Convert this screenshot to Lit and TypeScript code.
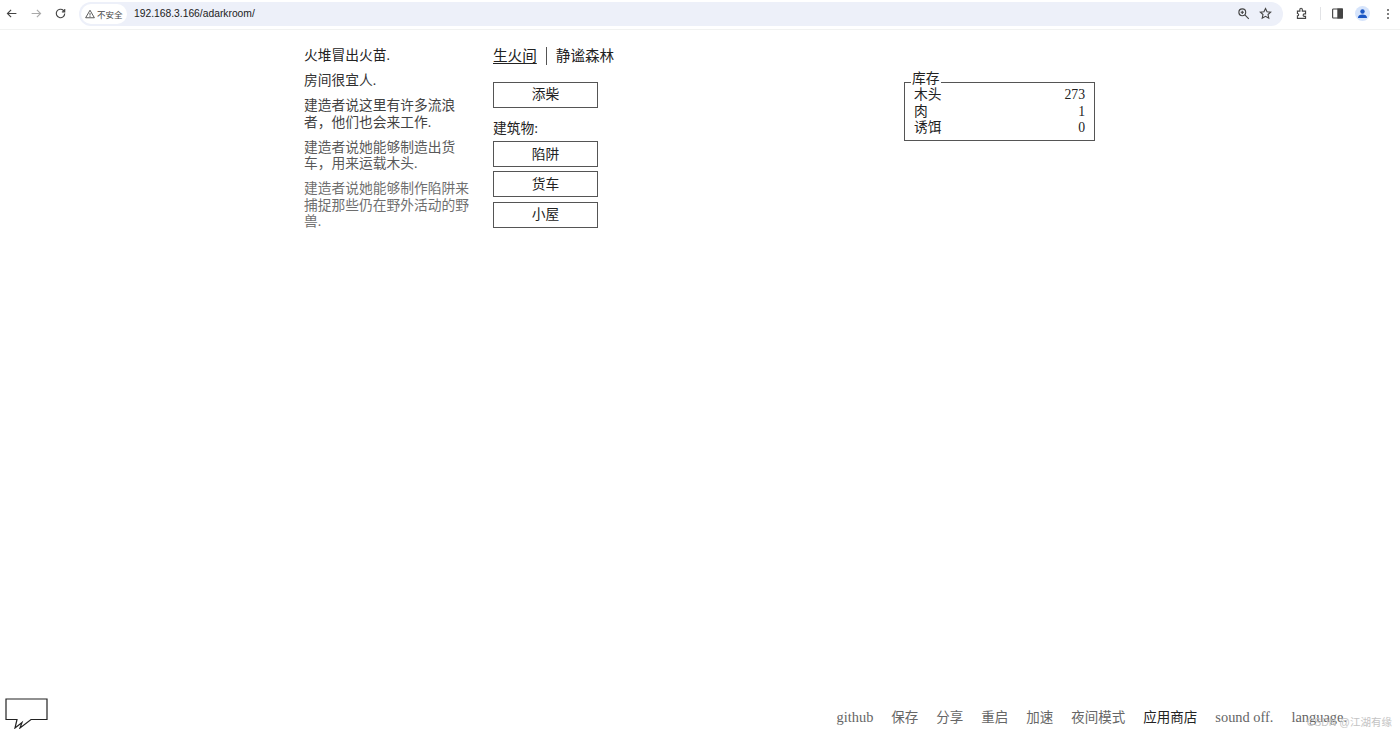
import { LitElement, html, css, svg } from "lit";
import { customElement } from "lit/decorators.js";

const messages: [string, number][] = [
  ["火堆冒出火苗.", 1],
  ["房间很宜人.", 0.92],
  ["建造者说这里有许多流浪者，他们也会来工作.", 0.85],
  ["建造者说她能够制造出货车，用来运载木头.", 0.75],
  ["建造者说她能够制作陷阱来捕捉那些仍在野外活动的野兽.", 0.65],
];
const builds = ["陷阱", "货车", "小屋"];
const stores = [["木头", "273"], ["肉", "1"], ["诱饵", "0"]];
const footer: [string, string][] = [
  ["github", "dim latin"], ["保存", "dim"], ["分享", "dim"], ["重启", "dim"], ["加速", "dim"],
  ["夜间模式", "dim"], ["应用商店", "strong"], ["sound off.", "dim latin"], ["language.", "dim latin"],
];

const icon = (body: unknown, cls = "ico", box = "0 0 16 16") =>
  html`<svg class=${cls} viewBox=${box} fill="none" stroke="currentColor" stroke-width="1.4">${body}</svg>`;

@customElement("app-root")
export class AppRoot extends LitElement {
  static styles = css`
    :host {
      display: flex;
      flex-direction: column;
      height: 732px;
      overflow: hidden;
      background: #fff;
      color: #222;
      position: relative;
      font: 13.75px/16.6px "Liberation Serif", "Noto Sans CJK SC", serif;
    }
    .chrome {
      flex: none;
      height: 30px;
      box-sizing: border-box;
      border-bottom: 1px solid #f1f2f1;
      display: flex;
      align-items: center;
      padding: 0 0 2px 5px;
      color: #444;
    }
    .ico { width: 13px; height: 13px; flex: none; }
    .nav { display: flex; gap: 11.5px; width: 74px; flex: none; }
    .nav .off { color: #aaa; }
    .url {
      width: 1204px;
      height: 24px;
      flex: none;
      background: #edf0f9;
      border-radius: 12px;
      display: flex;
      align-items: center;
      box-sizing: border-box;
      padding: 0 10px 0 2px;
      font: 10.3px "Liberation Sans", "Noto Sans CJK SC", sans-serif;
      color: #222;
    }
    .chip {
      display: flex;
      align-items: center;
      gap: 2px;
      height: 20px;
      width: 46px;
      box-sizing: border-box;
      padding-left: 4px;
      background: #fff;
      border-radius: 10px;
      font-size: 8.5px;
      color: #444;
      margin-right: 7px;
    }
    .chip .ico { width: 10px; height: 10px; }
    .addr { flex: 1; }
    .urlicons { display: flex; gap: 9px; color: #444; padding-right: 1px; }
    .tools {
      display: flex;
      align-items: center;
      color: #444;
      margin-left: 12px;
    }
    .sep { width: 1px; height: 13px; background: #e2e3e6; margin: 0 10.5px 0 11.5px; }
    .avatar {
      width: 15px; height: 15px; border-radius: 50%; background: #d6e4fb;
      margin-left: 11px; color: #1a56c4; display: flex; align-items: center; justify-content: center;
    }
    .avatar svg { width: 11px; height: 11px; }
    .dots { display: flex; flex-direction: column; gap: 2px; margin-left: 16.5px; }
    .dots i { width: 2px; height: 2px; background: #555; border-radius: 50%; display: block; }

    .stage {
      flex: 1;
      display: flex;
      align-items: flex-start;
      padding: 18px 0 0 304px;
    }
    .notes { width: 165px; flex: none; margin-right: 24px; }
    .notes p { margin: 0 0 8.4px; }
    .room { width: 411px; flex: none; }
    .tabs {
      display: flex;
      align-items: center;
      height: 18px;
      font-size: 14.6px;
      margin-top: -1px;
    }
    .tab { padding-right: 9px; line-height: 18px; color: #222; }
    .tab.on { text-decoration: underline; text-underline-offset: 2px; }
    .tab + .tab { border-left: 1px solid #555; padding-left: 9px; }
    button {
      display: block;
      box-sizing: border-box;
      width: 105px;
      height: 26px;
      background: #fff;
      border: 1px solid #555;
      font: inherit;
      color: #222;
      padding: 0;
    }
    .list button { padding-top: 2px; }
    .light { margin-top: 17px; }
    .label { margin: 13px 0 4px; height: 16px; line-height: 16px; }
    .list { display: flex; flex-direction: column; gap: 4.4px; }
    .stores {
      width: 191px;
      box-sizing: border-box;
      margin-top: 34px;
      border: 1px solid #555;
      padding: 4px 9px 3px 9px;
      position: relative;
      flex: none;
    }
    .legend {
      position: absolute;
      top: -13px;
      left: 6px;
      padding: 0 1px;
      background: #fff;
      line-height: 18px;
      height: 13px;
      color: #222;
    }
    .row { display: flex; justify-content: space-between; height: 16.5px; color: #222; }

    .foot {
      flex: none;
      height: 36px;
      display: flex;
      align-items: flex-start;
      padding-left: 5px;
      position: relative;
    }
    .bubble { width: 44px; height: 33px; color: #222; flex: none; }
    .links {
      margin-left: auto;
      margin-right: 53px;
      display: flex;
      align-items: baseline;
      gap: 18px;
      padding-top: 13px;
      font-size: 13.5px;
    }
    .latin { font-size: 14.4px; }
    .dim { color: #666; }
    .strong { color: #222; }
    .mark {
      position: absolute;
      right: 8px;
      bottom: 3px;
      font: 10.5px "Liberation Sans", "Noto Sans CJK SC", sans-serif;
      color: #c4c4c4;
    }
  `;

  render() {
    return html`
      <div class="chrome">
        <div class="nav">
          ${icon(svg`<path d="M14 8H3M7.5 3.5 3 8l4.5 4.5"/>`)}
          ${icon(svg`<path d="M2 8h11M8.5 3.5 13 8l-4.5 4.5"/>`, "ico off")}
          ${icon(svg`<path d="M13.2 8a5.2 5.2 0 1 1-1.5-3.7L13.2 6M13.2 2.5V6H9.7"/>`)}
        </div>
        <div class="url">
          <span class="chip">
            ${icon(svg`<path d="M8 2 15 14H1Z"/><path d="M8 6.5v4M8 11.5v1.3"/>`)}不安全
          </span>
          <span class="addr">192.168.3.166/adarkroom/</span>
          <span class="urlicons">
            ${icon(svg`<circle cx="6.5" cy="6.5" r="4.2"/><path d="m10 10 4.5 4.5M4.5 6.5h4M6.5 4.5v4"/>`)}
            ${icon(svg`<path d="m8 1.8 1.9 4 4.4.5-3.2 3 .9 4.4L8 11.5l-4 2.2.9-4.4-3.2-3 4.4-.5Z"/>`)}
          </span>
        </div>
        <div class="tools">
          ${icon(svg`<path d="M3 5h3V3a1.5 1.5 0 0 1 3 0v2h4v3.5h-1.5a1.5 1.5 0 0 0 0 3H13V14H3v-3a1.5 1.5 0 0 0 0-3Z"/>`)}
          <span class="sep"></span>
          ${icon(svg`<rect x="2" y="2.5" width="12" height="11" rx="1"/><rect x="8.5" y="2.5" width="5.5" height="11" fill="currentColor"/>`)}
          <span class="avatar">
            <svg viewBox="0 0 12 12" fill="currentColor"><circle cx="6" cy="3.8" r="2.4"/><path d="M1 11c0-3 2.2-4 5-4s5 1 5 4Z"/></svg>
          </span>
          <span class="dots"><i></i><i></i><i></i></span>
        </div>
      </div>

      <div class="stage">
        <div class="notes">
          ${messages.map(([t, o]) => html`<p style="opacity:${o}">${t}</p>`)}
        </div>
        <div class="room">
          <div class="tabs">
            <span class="tab on">生火间</span><span class="tab">静谧森林</span>
          </div>
          <button class="light">添柴</button>
          <div class="label">建筑物:</div>
          <div class="list">${builds.map((b) => html`<button>${b}</button>`)}</div>
        </div>
        <div class="stores">
          <div class="legend">库存</div>
          ${stores.map(([k, v]) => html`<div class="row"><span>${k}</span><span>${v}</span></div>`)}
        </div>
      </div>

      <div class="foot">
        <svg class="bubble" viewBox="0 0 44 33" fill="#fff" stroke="currentColor" stroke-width="1.2">
          <path d="M1 3H42V23.5H26L15 32 17 26.5 10 32 12 23.5H1Z"/>
        </svg>
        <div class="links">
          ${footer.map(([t, c]) => html`<span class=${c}>${t}</span>`)}
        </div>
        <span class="mark">CSDN @江湖有缘</span>
      </div>
    `;
  }
}
